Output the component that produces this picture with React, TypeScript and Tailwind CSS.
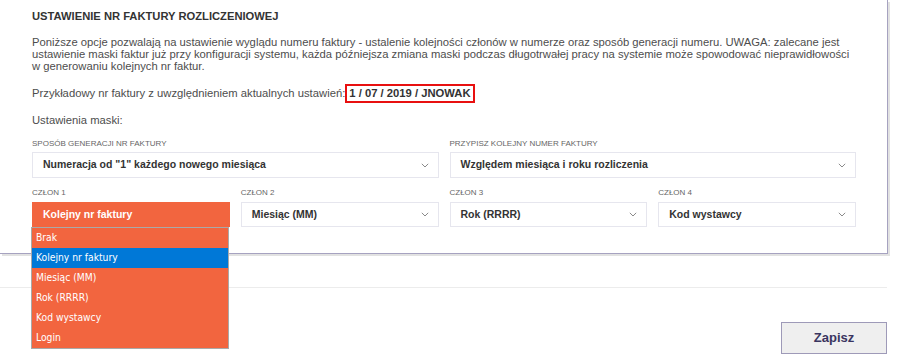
import React from "react";

const Chevron = () => (
  <svg width="8" height="5" viewBox="0 0 8 5" className="shrink-0">
    <path d="M0.8 0.8 L4 4 L7.2 0.8" fill="none" stroke="#8a8a8a" strokeWidth="1" />
  </svg>
);

function Select({ text, orange = false }: { text: string; orange?: boolean }) {
  if (orange) {
    return (
      <div className="h-[25px] bg-[#f2653f] border border-[#f2653f] flex items-center pl-[10px] pr-[9px] text-white font-bold text-[10.5px]">
        {text}
      </div>
    );
  }
  return (
    <div className="h-[25px] bg-white border border-[#e6e6ee] flex items-center justify-between pl-[10px] pr-[9px] text-[#333] font-bold text-[10.5px]">
      <span>{text}</span>
      <Chevron />
    </div>
  );
}

function Label({ text }: { text: string }) {
  return <div className="text-[8px] leading-[10px] text-[#666] uppercase">{text}</div>;
}

export default function App() {
  const items = ["Brak", "Kolejny nr faktury", "Miesiąc (MM)", "Rok (RRRR)", "Kod wystawcy", "Login"];
  return (
    <div className="w-[924px] h-[357px] bg-white overflow-hidden relative font-['Liberation_Sans',Arial,sans-serif]">
      <div className="w-[888px] border-r border-b border-[#a6a2c0] shadow-[2px_2px_0_#e2e2e2] pl-[32px] pr-[31px] pt-[9px] pb-[26px]">
        <div className="text-[11.2px] leading-[14px] font-bold text-[#333]">USTAWIENIE NR FAKTURY ROZLICZENIOWEJ</div>
        <div className="mt-[13px] text-[11.25px] leading-[12px] text-[#4d4d4d]">
          Poniższe opcje pozwalają na ustawienie wyglądu numeru faktury - ustalenie kolejności członów w numerze oraz sposób generacji numeru. UWAGA: zalecane jest ustawienie maski faktur już przy konfiguracji systemu, każda późniejsza zmiana maski podczas długotrwałej pracy na systemie może spowodować nieprawidłowości w generowaniu kolejnych nr faktur.
        </div>
        <div className="mt-[12px] flex items-center h-[19px] text-[11.25px] text-[#4d4d4d]">
          <span>Przykładowy nr faktury z uwzględnieniem aktualnych ustawień:</span>
          <span className="h-[19px] flex items-center border-2 border-[#e81010] px-[2px] font-bold text-[#333]">1 / 07 / 2019 / JNOWAK</span>
        </div>
        <div className="mt-[10px] text-[11.25px] leading-[14px] text-[#4d4d4d]">Ustawienia maski:</div>
        <div className="mt-[12px] grid grid-cols-2 gap-x-[11px]">
          <div>
            <Label text="Sposób generacji nr faktury" />
            <div className="mt-[3px]">
              <div className="h-[26px] bg-white border border-[#e6e6ee] flex items-center justify-between pl-[10px] pr-[9px] text-[#333] font-bold text-[10.5px]">
                <span>Numeracja od "1" każdego nowego miesiąca</span>
                <Chevron />
              </div>
            </div>
          </div>
          <div>
            <Label text="Przypisz kolejny numer faktury" />
            <div className="mt-[3px]">
              <div className="h-[26px] bg-white border border-[#e6e6ee] flex items-center justify-between pl-[10px] pr-[9px] text-[#333] font-bold text-[10.5px]">
                <span>Względem miesiąca i roku rozliczenia</span>
                <Chevron />
              </div>
            </div>
          </div>
        </div>
        <div className="mt-[10px] grid grid-cols-4 gap-x-[11px]">
          <div className="relative">
            <Label text="Człon 1" />
            <div className="mt-[4px]">
              <Select text="Kolejny nr faktury" orange />
            </div>
            <div className="absolute left-[-1px] top-[39px] w-[198px] border border-[#a9a9a9] bg-[#f2653f] z-10 font-['DejaVu_Sans_Condensed','DejaVu_Sans',sans-serif] text-[10.25px] text-white">
              {items.map((it, i) => (
                <div key={it} className={`h-[20px] flex items-center pl-[4px] ${i === 1 ? "bg-[#0078d7]" : ""}`}>
                  {it}
                </div>
              ))}
            </div>
          </div>
          <div>
            <Label text="Człon 2" />
            <div className="mt-[4px]">
              <Select text="Miesiąc (MM)" />
            </div>
          </div>
          <div>
            <Label text="Człon 3" />
            <div className="mt-[4px]">
              <Select text="Rok (RRRR)" />
            </div>
          </div>
          <div>
            <Label text="Człon 4" />
            <div className="mt-[4px]">
              <Select text="Kod wystawcy" />
            </div>
          </div>
        </div>
      </div>
      <div className="w-[887px] mt-[33px] border-t border-[#ececec]"></div>
      <div className="w-[887px] flex justify-end mt-[34px]">
        <button className="w-[106px] h-[32px] bg-[#efefef] border border-[#9e9ab8] text-[#3a3560] font-bold text-[13px]">Zapisz</button>
      </div>
    </div>
  );
}
